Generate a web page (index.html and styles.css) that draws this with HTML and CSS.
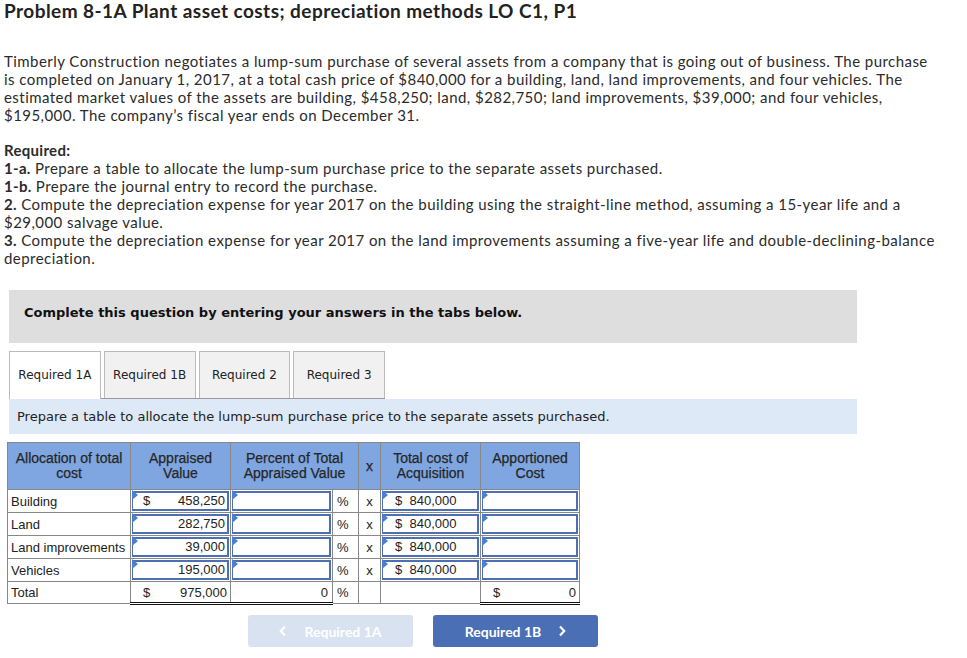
FILE: index.html
```html
<!DOCTYPE html>
<html lang="en">
<head>
    <meta charset="UTF-8">
    <title>Problem 8-1A Plant asset costs</title>
    <link rel="stylesheet" href="styles.css">
</head>
<body>
    <h1 class="title">Problem 8-1A Plant asset costs; depreciation methods LO C1, P1</h1>

    <p class="intro">Timberly Construction negotiates a lump-sum purchase of several assets from a company that is going out of business. The purchase is completed on January 1, 2017, at a total cash price of $840,000 for a building, land, land improvements, and four vehicles. The estimated market values of the assets are building, $458,250; land, $282,750; land improvements, $39,000; and four vehicles, $195,000. The company’s fiscal year ends on December 31.</p>

    <div class="required">
        <p><b>Required:</b></p>
        <p><b>1-a.</b> Prepare a table to allocate the lump-sum purchase price to the separate assets purchased.</p>
        <p><b>1-b.</b> Prepare the journal entry to record the purchase.</p>
        <p><b>2.</b> Compute the depreciation expense for year 2017 on the building using the straight-line method, assuming a 15-year life and a $29,000 salvage value.</p>
        <p><b>3.</b> Compute the depreciation expense for year 2017 on the land improvements assuming a five-year life and double-declining-balance depreciation.</p>
    </div>

    <div class="notice">Complete this question by entering your answers in the tabs below.</div>

    <div class="tabs">
        <div class="tab active">Required 1A</div>
        <div class="tab">Required 1B</div>
        <div class="tab">Required 2</div>
        <div class="tab">Required 3</div>
    </div>

    <div class="instruction">Prepare a table to allocate the lump-sum purchase price to the separate assets purchased.</div>

    <table class="alloc">
        <colgroup>
            <col style="width:123px">
            <col style="width:100px">
            <col style="width:102px">
            <col style="width:26px">
            <col style="width:22px">
            <col style="width:100px">
            <col style="width:99px">
        </colgroup>
        <thead>
            <tr>
                <th>Allocation of total cost</th>
                <th>Appraised Value</th>
                <th colspan="2">Percent of Total Appraised Value</th>
                <th>x</th>
                <th>Total cost of Acquisition</th>
                <th>Apportioned Cost</th>
            </tr>
        </thead>
        <tbody>
            <tr>
                <td class="label">Building</td>
                <td class="in"><div class="box money"><span>$</span><span>458,250</span></div></td>
                <td class="in"><div class="box"></div></td>
                <td class="pct">%</td>
                <td class="times">x</td>
                <td class="in"><div class="box cost">$&nbsp; 840,000</div></td>
                <td class="in"><div class="box"></div></td>
            </tr>
            <tr>
                <td class="label">Land</td>
                <td class="in"><div class="box money"><span></span><span>282,750</span></div></td>
                <td class="in"><div class="box"></div></td>
                <td class="pct">%</td>
                <td class="times">x</td>
                <td class="in"><div class="box cost">$&nbsp; 840,000</div></td>
                <td class="in"><div class="box"></div></td>
            </tr>
            <tr>
                <td class="label">Land improvements</td>
                <td class="in"><div class="box money"><span></span><span>39,000</span></div></td>
                <td class="in"><div class="box"></div></td>
                <td class="pct">%</td>
                <td class="times">x</td>
                <td class="in"><div class="box cost">$&nbsp; 840,000</div></td>
                <td class="in"><div class="box"></div></td>
            </tr>
            <tr>
                <td class="label">Vehicles</td>
                <td class="in"><div class="box money"><span></span><span>195,000</span></div></td>
                <td class="in"><div class="box"></div></td>
                <td class="pct">%</td>
                <td class="times">x</td>
                <td class="in"><div class="box cost">$&nbsp; 840,000</div></td>
                <td class="in"><div class="box"></div></td>
            </tr>
            <tr class="total">
                <td class="label">Total</td>
                <td class="dbl"><div class="money"><span>$</span><span>975,000</span></div></td>
                <td class="dbl num">0</td>
                <td class="pct">%</td>
                <td></td>
                <td></td>
                <td class="dbl"><div class="money"><span>$</span><span>0</span></div></td>
            </tr>
        </tbody>
    </table>

    <div class="nav">
        <button class="nav-btn prev" disabled>
            <svg class="chev" width="8" height="12" viewBox="0 0 8 12"><path d="M6 1.5 1.8 6 6 10.5" fill="none" stroke="#fff" stroke-width="2.2"/></svg>
            Required 1A
        </button>
        <button class="nav-btn next">
            Required 1B
            <svg class="chev" width="8" height="12" viewBox="0 0 8 12"><path d="M2 1.5 6.2 6 2 10.5" fill="none" stroke="#fff" stroke-width="2.2"/></svg>
        </button>
    </div>
</body>
</html>
```

FILE: styles.css
```css
* {
    margin: 0;
    padding: 0;
    box-sizing: border-box;
}

body {
    font-family: Lato, "Open Sans", sans-serif;
    color: #222;
    padding: 0 4px;
    width: 967px;
}

.title {
    font-size: 19px;
    font-weight: bold;
    letter-spacing: 0.45px;
    line-height: 22px;
}

.intro,
.required {
    font-size: 15px;
    letter-spacing: 0.45px;
    line-height: 18px;
    color: #2b2b2b;
}

.intro {
    margin-top: 30px;
    width: 932px;
}

.required {
    margin-top: 17px;
    width: 945px;
}

.required b {
    letter-spacing: 0.3px;
}

.notice {
    margin: 23px 0 0 5px;
    width: 848px;
    height: 53px;
    background: #dedede;
    font-family: "DejaVu Sans", Verdana, sans-serif;
    font-size: 13px;
    font-weight: bold;
    padding: 15px 0 0 15px;
    color: #111;
}

.tabs {
    display: flex;
    gap: 3px;
    margin: 8px 0 0 5px;
    border-bottom: 1px solid #999;
    width: 376px;
}

.tab {
    width: 92px;
    height: 47px;
    border: 1px solid #bbb;
    border-bottom: none;
    background: #f1f1f1;
    font-family: "DejaVu Sans", Verdana, sans-serif;
    font-size: 12px;
    line-height: 46px;
    text-align: center;
    color: #222;
}

.tab.active {
    background: #fff;
    margin-bottom: -1px;
    height: 48px;
}

.instruction {
    margin-left: 5px;
    width: 848px;
    height: 35px;
    background: #dde9f7;
    font-family: "DejaVu Sans", Verdana, sans-serif;
    font-size: 13px;
    line-height: 35px;
    padding-left: 8px;
    color: #222;
}

.alloc {
    margin: 8px 0 0 3px;
    border-collapse: collapse;
    table-layout: fixed;
    width: 573px;
    font-family: "Liberation Sans", Arial, sans-serif;
    font-size: 13px;
    color: #222;
}

.alloc th {
    background: #7fa6e0;
    border: 1px solid #888;
    height: 47px;
    font-weight: normal;
    font-size: 14px;
    line-height: 15px;
    text-align: center;
    color: #262626;
    -webkit-text-stroke: 0.25px #262626;
    padding: 0 3px;
}

.alloc td {
    border: 1px solid #888;
    height: 22px;
    padding: 0;
    vertical-align: middle;
}

.alloc td.label {
    padding-left: 3px;
}

.alloc td.in {
    padding: 1px;
}

.box {
    position: relative;
    height: 20px;
    border: 2px solid #4d6fb3;
    border-left-width: 1px;
    background: #fff;
    padding: 0 2px 0 6px;
    line-height: 16px;
}

.box::before {
    content: "";
    position: absolute;
    top: -3px;
    left: -1px;
    border-top: 5px solid transparent;
    border-bottom: 5px solid transparent;
    border-left: 6px solid #4a7fd4;
}

.money {
    display: flex;
    justify-content: space-between;
    padding-left: 10px;
    padding-right: 2px;
}

.cost {
    padding-left: 12px;
}

.alloc td.pct {
    padding-left: 4px;
}

.alloc td.times {
    text-align: center;
}

.alloc td.num {
    text-align: right;
    padding-right: 4px;
}

.alloc td.dbl {
    border-bottom: 3px double #111;
}

.total .money {
    padding: 0 3px 0 12px;
}

.nav {
    display: flex;
    gap: 20px;
    margin: 10px 0 0 244px;
}

.nav-btn {
    width: 165px;
    height: 32px;
    border: none;
    border-radius: 3px;
    color: #fff;
    font-family: Lato, "Open Sans", sans-serif;
    font-size: 14px;
    font-weight: bold;
    display: flex;
    align-items: center;
    justify-content: center;
    gap: 17px;
}

.nav-btn.prev {
    background: #d8e2f0;
}

.nav-btn.next {
    background: #4a6fb5;
}
```
